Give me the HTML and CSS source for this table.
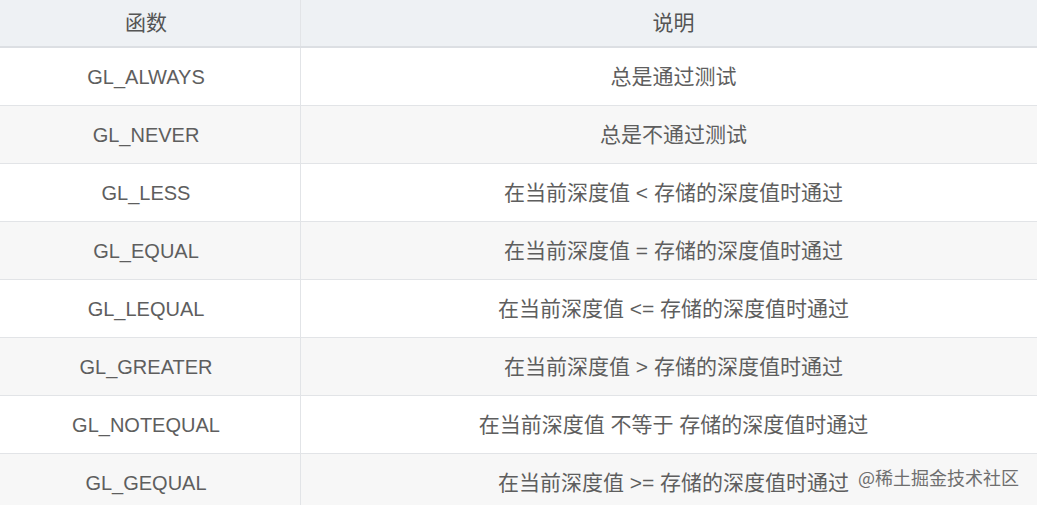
FILE: index.html
```html
<!DOCTYPE html>
<html lang="zh">
<head>
<meta charset="utf-8">
<title>深度测试函数</title>
<link rel="stylesheet" href="styles.css">
</head>
<body>
<div class="page">
  <table class="depth-table">
    <thead>
      <tr><th class="col-fn">函数</th><th class="col-desc">说明</th></tr>
    </thead>
    <tbody>
      <tr><td>GL_ALWAYS</td><td class="desc">总是通过测试</td></tr>
      <tr><td>GL_NEVER</td><td class="desc">总是不通过测试</td></tr>
      <tr><td>GL_LESS</td><td class="desc">在当前深度值 &lt; 存储的深度值时通过</td></tr>
      <tr><td>GL_EQUAL</td><td class="desc">在当前深度值 = 存储的深度值时通过</td></tr>
      <tr><td>GL_LEQUAL</td><td class="desc">在当前深度值 &lt;= 存储的深度值时通过</td></tr>
      <tr><td>GL_GREATER</td><td class="desc">在当前深度值 &gt; 存储的深度值时通过</td></tr>
      <tr><td>GL_NOTEQUAL</td><td class="desc">在当前深度值 不等于 存储的深度值时通过</td></tr>
      <tr><td>GL_GEQUAL</td><td class="desc">在当前深度值 &gt;= 存储的深度值时通过</td></tr>
    </tbody>
  </table>
  <div class="watermark">@稀土掘金技术社区</div>
</div>
</body>
</html>
```
FILE: styles.css
```css
html, body {
  margin: 0;
  padding: 0;
  background: #ffffff;
  overflow: hidden;
}
.page {
  position: relative;
  width: 1037px;
  height: 505px;
  overflow: hidden;
  font-family: "Liberation Sans", Arial, "Noto Sans CJK SC", sans-serif;
  color: #5e5e5e;
}
.depth-table {
  margin-left: -8px;
  width: 1054px;
  border-collapse: collapse;
  table-layout: fixed;
  font-size: 20px;
  line-height: 24px;
}
.col-fn { width: 308px; }
.depth-table th,
.depth-table td {
  text-align: center;
  vertical-align: middle;
  padding: 0;
}
.depth-table th {
  height: 46px;
  background: #eef1f4;
  font-weight: normal;
  font-size: 21px;
  color: #555;
  border-bottom: 2px solid #dcdfe3;
}
.depth-table th + th,
.depth-table td + td {
  border-left: 1px solid #e2e4e7;
}
.depth-table td {
  height: 57px;
  border-bottom: 1px solid #e2e4e7;
}
.depth-table td.desc {
  font-size: 21px;
}
.depth-table tbody tr:nth-child(even) td {
  background: #f7f7f7;
}
.watermark {
  position: absolute;
  left: 858px;
  top: 464px;
  font-size: 18px;
  color: #6e6e6e;
  font-family: "Noto Sans CJK SC", sans-serif;
}
```
